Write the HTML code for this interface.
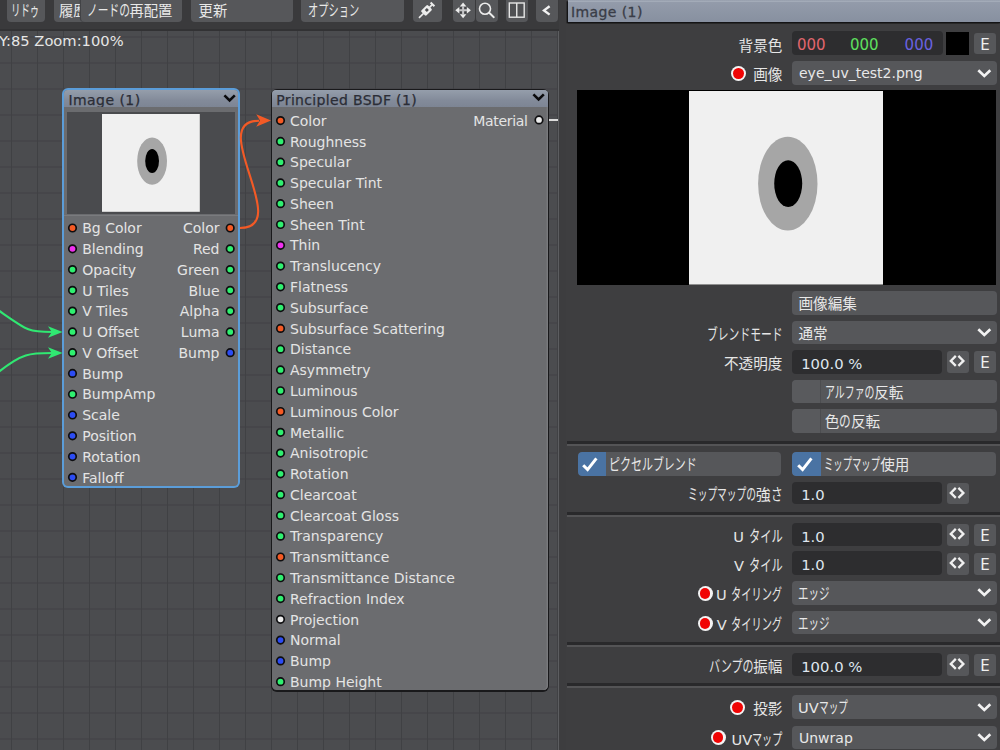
<!DOCTYPE html><html lang="ja"><head><meta charset="utf-8"><title>Node Editor</title><style>
*{box-sizing:border-box;margin:0;padding:0}
html,body{width:1000px;height:750px;overflow:hidden;background:#3d3d3f}
body{position:relative;font-family:"DejaVu Sans","Liberation Sans","Noto Sans CJK JP",sans-serif;font-size:14px;color:#e6e6e6;line-height:1}
.abs{position:absolute}
.k{display:inline-block;transform-origin:0 50%;white-space:nowrap}
.jp{white-space:nowrap;font-size:14.6px}
#topbar{position:absolute;left:0;top:0;width:559px;height:31px;background:#3a3a3c}
.tb{position:absolute;top:-4px;height:25.5px;background:#56575a;border-radius:4px;color:#e8e8e8;line-height:24px;padding-top:3.1px;white-space:nowrap;overflow:hidden}
#canvas{position:absolute;left:0;top:30.5px;width:558.5px;height:720px;background-color:#4b4c4f;overflow:hidden}
#canvas .edge{position:absolute;right:0;top:0;width:1px;height:100%;background:#5c5d60}
#grid{position:absolute;left:0;top:0;width:100%;height:100%;
 background-image:linear-gradient(to right,#404144 1.3px,transparent 1.3px),linear-gradient(to bottom,#404144 1.3px,transparent 1.3px);
 background-size:26px 26px;background-position:11px 5.5px}
.node{position:absolute;background:#6b6c6f;border-radius:6px}
.nhead{position:absolute;left:0;top:0;right:0;height:16.8px;background:linear-gradient(#959eab,#838b9a 60%,#7d8594);border-radius:4px 4px 0 0;color:#2b2d36;font-size:14px;white-space:nowrap;overflow:hidden}
.nhead span{position:absolute;left:4px;top:1.3px;line-height:18px;-webkit-text-stroke:.25px #2b2d36}
.port{position:absolute;width:9.2px;height:9.2px;border-radius:50%;border:1.7px solid #0e0e10}
.pl{position:absolute;font-size:14px;line-height:20px;color:#e4e4e4;white-space:nowrap}
.g{background:#2ff070}.o{background:#f55a24}.m{background:#f030f0}.b{background:#2c4cf4}.w{background:#ececec}
#rp{position:absolute;left:566px;top:0;width:434px;height:750px;background:#3e3e40}
#rph{position:absolute;left:567.5px;top:0;width:432.5px;height:21.7px;background:linear-gradient(#9098a7 0,#a3abb8 1px,#a3abb8 1.8px,#939baa 2.4px,#8790a0 100%);-webkit-text-stroke:.3px #3a3d47;box-shadow:-1.4px 1.3px 0 #141416,0 1.3px 0 #141416;color:#3a3d47;font-size:14px;line-height:24px;padding-left:3.4px;letter-spacing:.42px;overflow:hidden}
.lab{position:absolute;right:217.6px;height:25px;line-height:27.2px;text-align:right;white-space:nowrap;color:#e6e6e6}
.btn{position:absolute;background:#56575a;border-radius:4px;height:23.5px;line-height:25.8px;color:#e8e8e8;white-space:nowrap;overflow:hidden}
.btn.lt{font-size:14px;line-height:25.6px}
.fld{position:absolute;background:#2d2d2f;border-radius:4px;height:23.5px;line-height:28.8px;font-size:14.8px;color:#dfe6ee;white-space:nowrap;padding-left:9.7px;overflow:hidden}
.sb{position:absolute;background:#56575a;border-radius:3px;width:22px;height:21.5px;color:#f0f0f0;text-align:center;line-height:24.4px;font-size:15px;overflow:hidden}
.sep{position:absolute;left:567.3px;right:0;height:5px;background:linear-gradient(#29292b 0,#29292b 2.7px,#545456 2.7px,#545456 5px)}
.dot{position:absolute;width:15px;height:15px;border-radius:50%;background:#f4f4f4}
.dot i{position:absolute;left:2.1px;top:2.1px;width:10.8px;height:10.8px;border-radius:50%;background:#f00404}
.chk{position:absolute;left:0;top:0;bottom:0;background:#4a73a3;border-radius:4px 0 0 4px}
.chk0{position:absolute;left:0;top:0;bottom:0;width:29.5px;background:#595a5d;border-right:1px solid #4c4d50;border-radius:4px 0 0 4px}
svg{position:absolute;overflow:visible}
</style></head><body>
<div id="canvas"><div id="grid"></div><div class="edge"></div></div>
<div class="abs" style="left:-1px;top:33px;font-size:14.7px;line-height:16px;color:#e6e6e6;white-space:nowrap">Y:85 Zoom:100%</div>
<div id="topbar"></div>
<div class="abs" style="left:0;top:29.3px;width:558.5px;height:1.4px;background:#323234"></div>
<div class="tb jp" style="font-size:14.3px;left:7px;width:37.5px;padding-left:4.2px;"><span class="k" style="transform:scale(0.66,1.08);margin-right:-14.59px">リドゥ</span></div>
<div class="tb jp" style="font-size:14.3px;left:54px;width:46px;padding-left:5px;">履歴</div>
<div class="tb jp" style="font-size:14.3px;left:81px;width:100.5px;padding-left:5.5px;box-shadow:-1.2px 0 0 #424346"><span class="k" style="transform:scale(0.75,1.08);margin-right:-14.30px">ノードの</span>再配置</div>
<div class="tb jp" style="font-size:14.3px;left:191px;width:101.5px;padding-left:7.6px;">更新</div>
<div class="tb jp" style="font-size:14.3px;left:301px;width:102.5px;padding-left:7px;"><span class="k" style="transform:scale(0.715,1.08);margin-right:-20.38px">オプション</span></div>
<div class="tb jp" style="font-size:14.3px;left:413px;width:28.5px;padding-left:5px;"></div>
<div class="tb jp" style="font-size:14.3px;left:453px;width:21.5px;padding-left:5px;"></div>
<div class="tb jp" style="font-size:14.3px;left:476px;width:22px;padding-left:5px;"></div>
<div class="tb jp" style="font-size:14.3px;left:506px;width:22px;padding-left:5px;"></div>
<div class="tb jp" style="font-size:14.3px;left:536px;width:21.799999999999955px;padding-left:5px;"></div>
<svg style="left:413px;top:0" width="29" height="22" viewBox="0 0 29 22">
<g transform="translate(13.5 10.4) rotate(-45)" stroke="#ececec" fill="none" stroke-linecap="butt">
<path d="M-10.6 0 H-4" stroke-width="1.7"/>
<rect x="-4.7" y="-3.6" width="9.4" height="7.2" rx="1.3" fill="#ececec" stroke="none"/>
<rect x="-0.9" y="-1.5" width="2.9" height="2.9" fill="#4c4d50" stroke="none"/>
<path d="M4 0 H8.4" stroke-width="1.7"/>
<path d="M8.5 -2.7 V2.7" stroke-width="2"/>
</g></svg>
<svg style="left:453px;top:0" width="22" height="22" viewBox="0 0 22 22"><g transform="translate(10.1 10.25)">
<g fill="#ececec"><path d="M0 -7.7 L3.3 -3.7 L-3.3 -3.7 Z"/><path d="M0 7.9 L3.3 3.9 L-3.3 3.9 Z"/>
<path d="M-7.8 0 L-3.8 -3.3 L-3.8 3.3 Z"/><path d="M7.8 0 L3.8 -3.3 L3.8 3.3 Z"/></g>
<g fill="#c4c4c6"><rect x="-1" y="-4" width="2" height="8"/><rect x="-4" y="-1" width="8" height="2"/></g>
<g fill="#3e3f42"><rect x="-3" y="-3" width="1.5" height="1.5"/><rect x="1.5" y="-3" width="1.5" height="1.5"/><rect x="-3" y="1.5" width="1.5" height="1.5"/><rect x="1.5" y="1.5" width="1.5" height="1.5"/></g>
</g></svg>
<svg style="left:476px;top:0" width="22" height="22" viewBox="0 0 22 22"><g stroke="#ececec" fill="none" stroke-linecap="round">
<circle cx="9" cy="8.7" r="5.5" stroke-width="1.6"/><path d="M13.2 12.8 L17.8 17.2" stroke-width="1.9"/></g></svg>
<svg style="left:506px;top:0" width="22" height="22" viewBox="0 0 22 22"><g stroke="#e6e6e6" fill="none" stroke-width="1.4">
<rect x="3.3" y="3" width="14.9" height="14.2" fill="#4f5053"/><path d="M10.75 3 V17.2"/></g></svg>
<svg style="left:536px;top:0" width="22" height="22" viewBox="0 0 22 22"><path d="M13.6 6.2 L8 10.4 L13.6 14.6" stroke="#f2f2f2" stroke-width="2.4" fill="none" stroke-linejoin="miter"/></svg>
<div class="node" style="left:62.4px;top:88px;width:177.5px;height:399.8px;background:#5b9dd9;border-radius:6px"></div>
<div class="node" style="left:64.4px;top:90px;width:173.5px;height:395.8px;border-radius:4px"><div class="nhead"><span style="letter-spacing:.45px">Image (1)</span></div><div class="abs" style="left:2.3px;top:21.8px;width:168.6px;height:101.8px;background:#4a4b4e"></div><div class="abs" style="left:0;right:0;top:125.2px;height:1.2px;background:#7a7b7e"></div></div>
<svg style="left:101.8px;top:114px" width="97.8" height="97.8" viewBox="0 0 97.8 97.8"><rect width="97.8" height="97.8" fill="#f0f0f0"/>
<ellipse cx="50.1" cy="47.1" rx="14.9" ry="23.7" fill="#a6a6a6"/><ellipse cx="50.1" cy="47.1" rx="6.9" ry="12" fill="#000"/></svg>
<svg style="left:223.4px;top:93.6px" width="14" height="9" viewBox="0 0 14 9"><path d="M1.4 1.4 L6.6 6.4 L11.8 1.4" stroke="#0a0a0c" stroke-width="2.6" fill="none"/></svg>
<div class="pl" style="left:82.20px;top:218.20px">Bg Color</div>
<div class="pl" style="left:82.20px;top:238.98px">Blending</div>
<div class="pl" style="left:82.20px;top:259.76px">Opacity</div>
<div class="pl" style="left:82.20px;top:280.54px">U Tiles</div>
<div class="pl" style="left:82.20px;top:301.32px">V Tiles</div>
<div class="pl" style="left:82.20px;top:322.10px">U Offset</div>
<div class="pl" style="left:82.20px;top:342.88px">V Offset</div>
<div class="pl" style="left:82.20px;top:363.66px">Bump</div>
<div class="pl" style="left:82.20px;top:384.44px">BumpAmp</div>
<div class="pl" style="left:82.20px;top:405.22px">Scale</div>
<div class="pl" style="left:82.20px;top:426.00px">Position</div>
<div class="pl" style="left:82.20px;top:446.78px">Rotation</div>
<div class="pl" style="left:82.20px;top:467.56px">Falloff</div>
<div class="pl" style="right:780.50px;top:218.20px">Color</div>
<div class="pl" style="right:780.50px;top:238.98px">Red</div>
<div class="pl" style="right:780.50px;top:259.76px">Green</div>
<div class="pl" style="right:780.50px;top:280.54px">Blue</div>
<div class="pl" style="right:780.50px;top:301.32px">Alpha</div>
<div class="pl" style="right:780.50px;top:322.10px">Luma</div>
<div class="pl" style="right:780.50px;top:342.88px">Bump</div>
<div class="node" style="left:270.5px;top:88.5px;width:278.7px;height:603.2px;background:#19191b;border-radius:6px"></div>
<div class="node" style="left:272.1px;top:90.1px;width:275.5px;height:600px;border-radius:4.5px;box-shadow:inset -1.4px 0 0 #797a7d"><div class="nhead" style="height:16.8px"><span style="left:4.2px;letter-spacing:.33px">Principled BSDF (1)</span></div></div>
<svg style="left:532.2px;top:93.4px" width="14" height="9" viewBox="0 0 14 9"><path d="M1.4 1.4 L6.6 6.4 L11.8 1.4" stroke="#0a0a0c" stroke-width="2.6" fill="none"/></svg>
<div class="pl" style="left:290.00px;top:110.80px">Color</div>
<div class="pl" style="left:290.00px;top:131.58px">Roughness</div>
<div class="pl" style="left:290.00px;top:152.36px">Specular</div>
<div class="pl" style="left:290.00px;top:173.14px">Specular Tint</div>
<div class="pl" style="left:290.00px;top:193.92px">Sheen</div>
<div class="pl" style="left:290.00px;top:214.70px">Sheen Tint</div>
<div class="pl" style="left:290.00px;top:235.48px">Thin</div>
<div class="pl" style="left:290.00px;top:256.26px">Translucency</div>
<div class="pl" style="left:290.00px;top:277.04px">Flatness</div>
<div class="pl" style="left:290.00px;top:297.82px">Subsurface</div>
<div class="pl" style="left:290.00px;top:318.60px">Subsurface Scattering</div>
<div class="pl" style="left:290.00px;top:339.38px">Distance</div>
<div class="pl" style="left:290.00px;top:360.16px">Asymmetry</div>
<div class="pl" style="left:290.00px;top:380.94px">Luminous</div>
<div class="pl" style="left:290.00px;top:401.72px">Luminous Color</div>
<div class="pl" style="left:290.00px;top:422.50px">Metallic</div>
<div class="pl" style="left:290.00px;top:443.28px">Anisotropic</div>
<div class="pl" style="left:290.00px;top:464.06px">Rotation</div>
<div class="pl" style="left:290.00px;top:484.84px">Clearcoat</div>
<div class="pl" style="left:290.00px;top:505.62px">Clearcoat Gloss</div>
<div class="pl" style="left:290.00px;top:526.40px">Transparency</div>
<div class="pl" style="left:290.00px;top:547.18px">Transmittance</div>
<div class="pl" style="left:290.00px;top:567.96px">Transmittance Distance</div>
<div class="pl" style="left:290.00px;top:588.74px">Refraction Index</div>
<div class="pl" style="left:290.00px;top:609.52px">Projection</div>
<div class="pl" style="left:290.00px;top:630.30px">Normal</div>
<div class="pl" style="left:290.00px;top:651.08px">Bump</div>
<div class="pl" style="left:290.00px;top:671.86px">Bump Height</div>
<div class="pl" style="right:472.30px;top:110.50px"><span style="letter-spacing:-.3px">Material</span></div>
<div class="abs" style="left:549px;top:118.9px;width:9px;height:2px;background:#dcdcdc"></div>
<svg style="left:0;top:0" width="560" height="750" viewBox="0 0 560 750"><g stroke="#0e0e10" stroke-width="1.7"><circle cx="72.50" cy="228.00" r="3.75" fill="#f55a24"/><circle cx="72.50" cy="248.78" r="3.75" fill="#f030f0"/><circle cx="72.50" cy="269.56" r="3.75" fill="#2ff070"/><circle cx="72.50" cy="290.34" r="3.75" fill="#2ff070"/><circle cx="72.50" cy="311.12" r="3.75" fill="#2ff070"/><circle cx="72.50" cy="331.90" r="3.75" fill="#2ff070"/><circle cx="72.50" cy="352.68" r="3.75" fill="#2ff070"/><circle cx="72.50" cy="373.46" r="3.75" fill="#2c4cf4"/><circle cx="72.50" cy="394.24" r="3.75" fill="#2ff070"/><circle cx="72.50" cy="415.02" r="3.75" fill="#2c4cf4"/><circle cx="72.50" cy="435.80" r="3.75" fill="#2c4cf4"/><circle cx="72.50" cy="456.58" r="3.75" fill="#2c4cf4"/><circle cx="72.50" cy="477.36" r="3.75" fill="#2c4cf4"/><circle cx="230.20" cy="228.00" r="3.75" fill="#f55a24"/><circle cx="230.20" cy="248.78" r="3.75" fill="#2ff070"/><circle cx="230.20" cy="269.56" r="3.75" fill="#2ff070"/><circle cx="230.20" cy="290.34" r="3.75" fill="#2ff070"/><circle cx="230.20" cy="311.12" r="3.75" fill="#2ff070"/><circle cx="230.20" cy="331.90" r="3.75" fill="#2ff070"/><circle cx="230.20" cy="352.68" r="3.75" fill="#2c4cf4"/><circle cx="280.50" cy="120.60" r="3.75" fill="#f55a24"/><circle cx="280.50" cy="141.38" r="3.75" fill="#2ff070"/><circle cx="280.50" cy="162.16" r="3.75" fill="#2ff070"/><circle cx="280.50" cy="182.94" r="3.75" fill="#2ff070"/><circle cx="280.50" cy="203.72" r="3.75" fill="#2ff070"/><circle cx="280.50" cy="224.50" r="3.75" fill="#2ff070"/><circle cx="280.50" cy="245.28" r="3.75" fill="#f030f0"/><circle cx="280.50" cy="266.06" r="3.75" fill="#2ff070"/><circle cx="280.50" cy="286.84" r="3.75" fill="#2ff070"/><circle cx="280.50" cy="307.62" r="3.75" fill="#2ff070"/><circle cx="280.50" cy="328.40" r="3.75" fill="#f55a24"/><circle cx="280.50" cy="349.18" r="3.75" fill="#2ff070"/><circle cx="280.50" cy="369.96" r="3.75" fill="#2ff070"/><circle cx="280.50" cy="390.74" r="3.75" fill="#2ff070"/><circle cx="280.50" cy="411.52" r="3.75" fill="#f55a24"/><circle cx="280.50" cy="432.30" r="3.75" fill="#2ff070"/><circle cx="280.50" cy="453.08" r="3.75" fill="#2ff070"/><circle cx="280.50" cy="473.86" r="3.75" fill="#2ff070"/><circle cx="280.50" cy="494.64" r="3.75" fill="#2ff070"/><circle cx="280.50" cy="515.42" r="3.75" fill="#2ff070"/><circle cx="280.50" cy="536.20" r="3.75" fill="#2ff070"/><circle cx="280.50" cy="556.98" r="3.75" fill="#f55a24"/><circle cx="280.50" cy="577.76" r="3.75" fill="#2ff070"/><circle cx="280.50" cy="598.54" r="3.75" fill="#2ff070"/><circle cx="280.50" cy="619.32" r="3.75" fill="#ececec"/><circle cx="280.50" cy="640.10" r="3.75" fill="#2c4cf4"/><circle cx="280.50" cy="660.88" r="3.75" fill="#2c4cf4"/><circle cx="280.50" cy="681.66" r="3.75" fill="#2ff070"/><circle cx="539.00" cy="119.90" r="3.75" fill="#ececec"/></g></svg>
<svg style="left:0;top:0" width="560" height="750" viewBox="0 0 560 750">
<g fill="none" stroke-width="2.1">
<path d="M240 228 C294 228 205 120.8 259 120.8" stroke="#f35a26"/>
<path d="M-2 310 C28 331 28 332 52 332" stroke="#30e872"/>
<path d="M-2 372.5 C22 353 30 353 52 353" stroke="#30e872"/>
</g>
<path d="M271 120.5 L256.2 114.3 L260 120.5 L256.2 126.7 Z" fill="#f35a26"/>
<path d="M62.6 332 L48 326.2 L51.8 332 L48 337.8 Z" fill="#30e872"/>
<path d="M62.6 353 L48 347.2 L51.8 353 L48 358.8 Z" fill="#30e872"/>
</svg>
<div id="rp"></div>
<div id="rph">Image (1)</div>
<div class="lab jp" style="top:31.5px">背景色</div>
<div class="fld" style="left:791.5px;top:31.3px;width:151px;height:24px;padding:0"></div>
<div class="abs" style="left:797px;top:32.6px;font-size:15px;line-height:24px;color:#e2666e">000</div>
<div class="abs" style="left:850px;top:32.6px;font-size:15px;line-height:24px;color:#5fe05f">000</div>
<div class="abs" style="left:904.6px;top:32.6px;font-size:15px;line-height:24px;color:#6a62e0">000</div>
<div class="abs" style="left:946.4px;top:32px;width:22.6px;height:22.5px;background:#000"></div>
<div class="sb" style="left:974px;top:32.70px">E</div>
<div class="lab jp" style="top:61.3px">画像</div>
<div class="dot" style="left:730.70px;top:65.80px"><i></i></div>
<div class="btn lt" style="left:791.5px;top:61.3px;width:205px;padding-left:7.5px">eye_uv_test2.png</div>
<svg style="left:977px;top:68.50px" width="15" height="10" viewBox="0 0 15 10"><path d="M1.3 1.3 L7.3 7 L13.3 1.3" stroke="#f2f2f2" stroke-width="2.7" fill="none"/></svg>
<div class="abs" style="left:577px;top:90px;width:419.3px;height:194.6px;background:#000"></div>
<svg style="left:689.1px;top:91px" width="194" height="193.6" viewBox="0 0 194 193.6"><rect width="194" height="193.6" fill="#f0f0f0"/>
<ellipse cx="98.8" cy="92.7" rx="29.7" ry="46.9" fill="#a6a6a6"/><ellipse cx="99.2" cy="92.6" rx="14" ry="23.4" fill="#000"/></svg>
<div class="btn jp" style="left:791.5px;top:291.2px;width:205px;padding-left:7px">画像編集</div>
<div class="lab jp" style="top:320.9px"><span class="k" style="transform:scale(0.74,1.08);margin-right:-26.57px">ブレンドモード</span></div>
<div class="btn jp" style="left:791.5px;top:320.9px;width:205px;padding-left:7px">通常</div>
<svg style="left:977px;top:328.10px" width="15" height="10" viewBox="0 0 15 10"><path d="M1.3 1.3 L7.3 7 L13.3 1.3" stroke="#f2f2f2" stroke-width="2.7" fill="none"/></svg>
<div class="lab jp" style="top:350.2px">不透明度</div>
<div class="fld" style="left:791.5px;top:350.2px;width:150.5px">100.0 %</div>
<div class="sb" style="left:946.8px;top:351.40px"></div>
<svg style="left:946.8px;top:351.40px" width="22" height="21.5" viewBox="0 0 22 21.5"><g stroke="#f0f0f0" stroke-width="2.3" fill="none"><path d="M8.8 4.9 L3.8 9.9 L8.8 14.9"/><path d="M11.4 4.9 L16.4 9.9 L11.4 14.9"/></g></svg>
<div class="sb" style="left:974px;top:351.40px">E</div>
<div class="btn jp" style="left:791.5px;top:379.7px;width:205px;padding-left:33.2px"><div class="chk0"></div><span class="k" style="transform:scale(0.68,1.08);margin-right:-23.36px">アルファの</span>反転</div>
<div class="btn jp" style="left:791.5px;top:409.3px;width:205px;padding-left:33.2px"><div class="chk0"></div>色<span class="k" style="transform:scale(0.8,1.08);margin-right:-2.92px">の</span>反転</div>
<div class="sep" style="top:440.5px"></div>
<div class="btn jp" style="left:577.6px;top:452.1px;width:203.6px;padding-left:31px"><div class="chk" style="width:28.3px"></div><svg style="left:3.8px;top:3.9px" width="18" height="17" viewBox="0 0 18 17"><path d="M2.2 9.2 L6.6 13.6 L15.4 2.4" stroke="#fff" stroke-width="3" fill="none"/></svg><span class="k" style="transform:scale(0.752,1.08);margin-right:-28.97px">ピクセルブレンド</span></div>
<div class="btn jp" style="left:791.8px;top:452.1px;width:204.5px;padding-left:32.3px"><div class="chk" style="width:29.3px"></div><svg style="left:4.6px;top:3.9px" width="18" height="17" viewBox="0 0 18 17"><path d="M2.2 9.2 L6.6 13.6 L15.4 2.4" stroke="#fff" stroke-width="3" fill="none"/></svg><span class="k" style="transform:scale(0.64,1.08);margin-right:-31.54px">ミップマップ</span>使用</div>
<div class="lab jp" style="top:481.3px"><span class="k" style="transform:scale(0.665,1.08);margin-right:-34.24px">ミップマップの</span>強<span class="k" style="transform:scale(0.8,1.08);margin-right:-2.92px">さ</span></div>
<div class="fld" style="left:791.5px;top:482px;width:150.5px;height:22.4px;line-height:26.6px">1.0</div>
<div class="sb" style="left:946.8px;top:482.70px"></div>
<svg style="left:946.8px;top:482.70px" width="22" height="21.5" viewBox="0 0 22 21.5"><g stroke="#f0f0f0" stroke-width="2.3" fill="none"><path d="M8.8 4.9 L3.8 9.9 L8.8 14.9"/><path d="M11.4 4.9 L16.4 9.9 L11.4 14.9"/></g></svg>
<div class="sep" style="top:512.2px"></div>
<div class="lab jp" style="top:522.8px">U <span class="k" style="transform:scale(0.77,1.08);margin-right:-10.07px">タイル</span></div>
<div class="fld" style="left:791.5px;top:522.8px;width:150.5px">1.0</div>
<div class="sb" style="left:946.8px;top:524.00px"></div>
<svg style="left:946.8px;top:524.00px" width="22" height="21.5" viewBox="0 0 22 21.5"><g stroke="#f0f0f0" stroke-width="2.3" fill="none"><path d="M8.8 4.9 L3.8 9.9 L8.8 14.9"/><path d="M11.4 4.9 L16.4 9.9 L11.4 14.9"/></g></svg>
<div class="sb" style="left:974px;top:524.00px">E</div>
<div class="lab jp" style="top:551.8px">V <span class="k" style="transform:scale(0.77,1.08);margin-right:-10.07px">タイル</span></div>
<div class="fld" style="left:791.5px;top:551.4px;width:150.5px">1.0</div>
<div class="sb" style="left:946.8px;top:553.00px"></div>
<svg style="left:946.8px;top:553.00px" width="22" height="21.5" viewBox="0 0 22 21.5"><g stroke="#f0f0f0" stroke-width="2.3" fill="none"><path d="M8.8 4.9 L3.8 9.9 L8.8 14.9"/><path d="M11.4 4.9 L16.4 9.9 L11.4 14.9"/></g></svg>
<div class="sb" style="left:974px;top:553.00px">E</div>
<div class="lab jp" style="top:581px">U <span class="k" style="transform:scale(0.7,1.08);margin-right:-21.90px">タイリング</span></div>
<div class="dot" style="left:697.50px;top:585.90px"><i></i></div>
<div class="btn jp" style="left:791.5px;top:581px;width:205px;padding-left:6.5px"><span class="k" style="transform:scale(0.72,1.08);margin-right:-12.26px">エッジ</span></div>
<svg style="left:977px;top:588.20px" width="15" height="10" viewBox="0 0 15 10"><path d="M1.3 1.3 L7.3 7 L13.3 1.3" stroke="#f2f2f2" stroke-width="2.7" fill="none"/></svg>
<div class="lab jp" style="top:610.8px">V <span class="k" style="transform:scale(0.7,1.08);margin-right:-21.90px">タイリング</span></div>
<div class="dot" style="left:697.50px;top:616.40px"><i></i></div>
<div class="btn jp" style="left:791.5px;top:610.8px;width:205px;padding-left:6.5px"><span class="k" style="transform:scale(0.72,1.08);margin-right:-12.26px">エッジ</span></div>
<svg style="left:977px;top:618.00px" width="15" height="10" viewBox="0 0 15 10"><path d="M1.3 1.3 L7.3 7 L13.3 1.3" stroke="#f2f2f2" stroke-width="2.7" fill="none"/></svg>
<div class="sep" style="top:641.7px"></div>
<div class="lab jp" style="top:652.8px"><span class="k" style="transform:scale(0.76,1.08);margin-right:-14.02px">バンプの</span>振幅</div>
<div class="fld" style="left:791.5px;top:652.8px;width:150.5px">100.0 %</div>
<div class="sb" style="left:946.8px;top:654.00px"></div>
<svg style="left:946.8px;top:654.00px" width="22" height="21.5" viewBox="0 0 22 21.5"><g stroke="#f0f0f0" stroke-width="2.3" fill="none"><path d="M8.8 4.9 L3.8 9.9 L8.8 14.9"/><path d="M11.4 4.9 L16.4 9.9 L11.4 14.9"/></g></svg>
<div class="sb" style="left:974px;top:654.00px">E</div>
<div class="sep" style="top:683.2px"></div>
<div class="lab jp" style="top:695.3px">投影</div>
<div class="dot" style="left:730.00px;top:699.70px"><i></i></div>
<div class="btn jp" style="left:791.5px;top:695.3px;width:205px;padding-left:6.5px">UV<span class="k" style="transform:scale(0.66,1.08);margin-right:-14.89px">マップ</span></div>
<svg style="left:977px;top:702.50px" width="15" height="10" viewBox="0 0 15 10"><path d="M1.3 1.3 L7.3 7 L13.3 1.3" stroke="#f2f2f2" stroke-width="2.7" fill="none"/></svg>
<div class="lab jp" style="top:725.6px">UV<span class="k" style="transform:scale(0.69,1.08);margin-right:-13.58px">マップ</span></div>
<div class="dot" style="left:710.50px;top:730.30px"><i></i></div>
<div class="btn lt" style="left:791.5px;top:725.6px;width:205px;padding-left:7.5px">Unwrap</div>
<svg style="left:977px;top:732.80px" width="15" height="10" viewBox="0 0 15 10"><path d="M1.3 1.3 L7.3 7 L13.3 1.3" stroke="#f2f2f2" stroke-width="2.7" fill="none"/></svg>
</body></html>
